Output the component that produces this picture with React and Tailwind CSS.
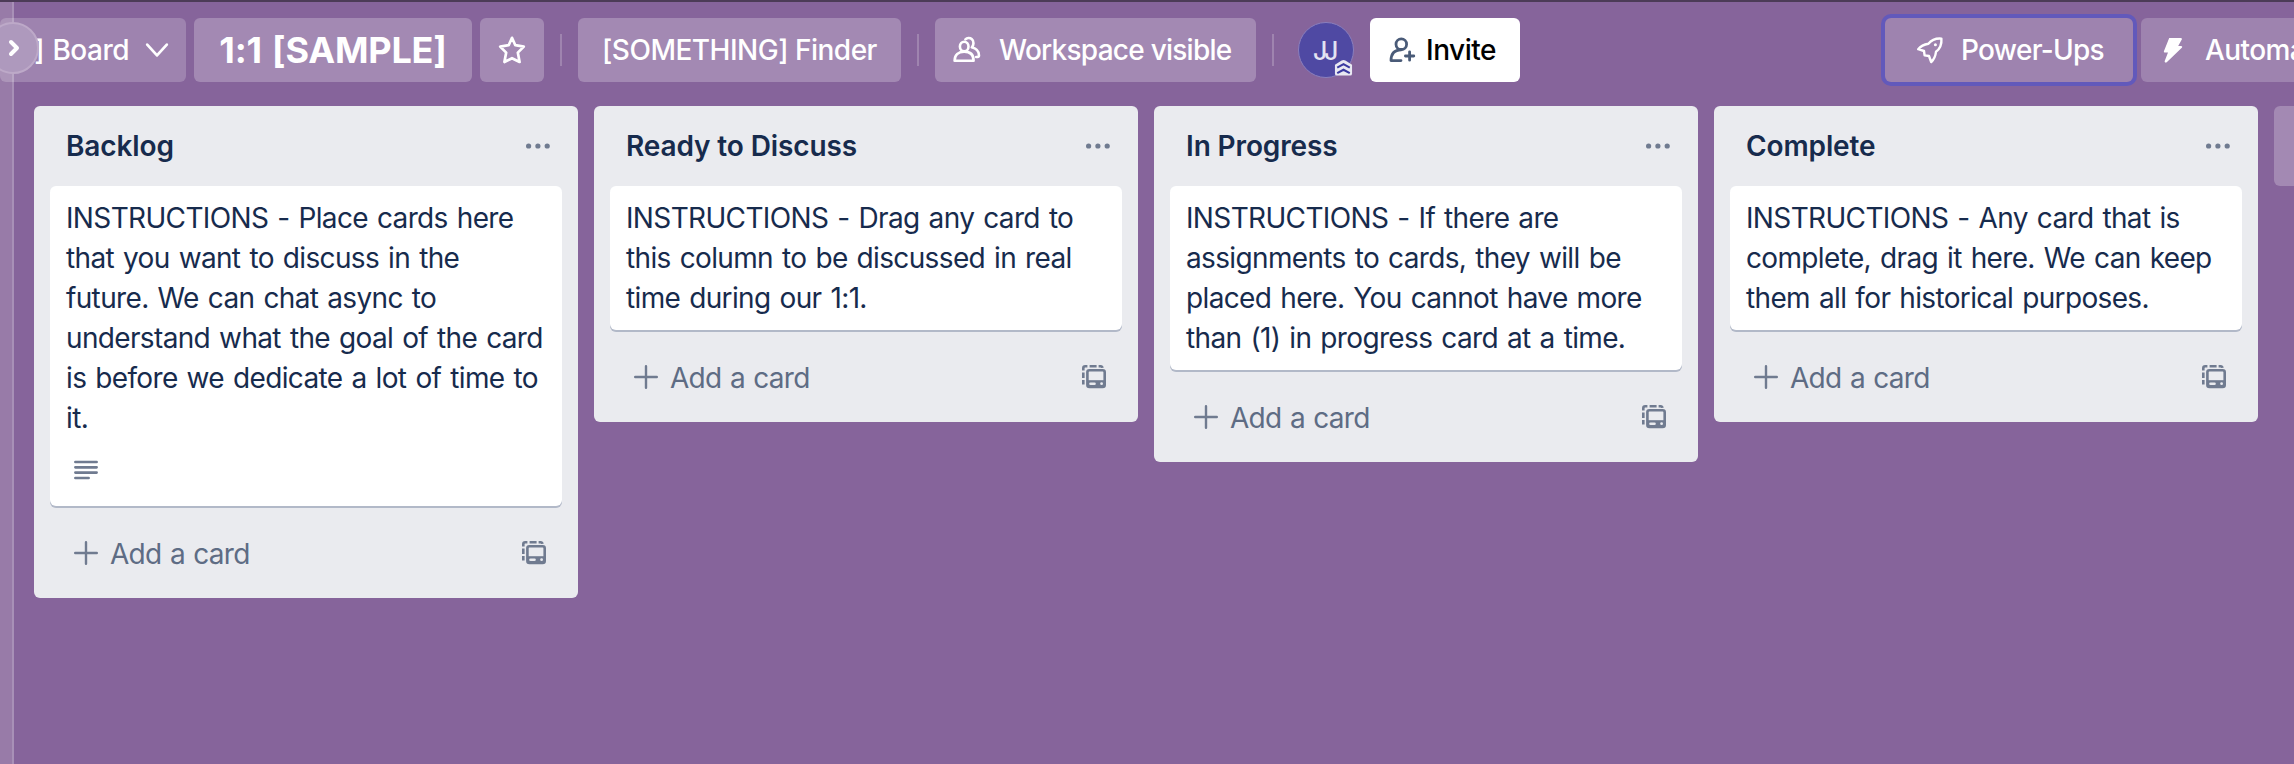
const lists = [
  {
    title: "Backlog",
    lines: [
      "INSTRUCTIONS - Place cards here",
      "that you want to discuss in the",
      "future. We can chat async to",
      "understand what the goal of the card",
      "is before we dedicate a lot of time to",
      "it.",
    ],
    description: true,
  },
  {
    title: "Ready to Discuss",
    lines: [
      "INSTRUCTIONS - Drag any card to",
      "this column to be discussed in real",
      "time during our 1:1.",
    ],
  },
  {
    title: "In Progress",
    lines: [
      "INSTRUCTIONS - If there are",
      "assignments to cards, they will be",
      "placed here. You cannot have more",
      "than (1) in progress card at a time.",
    ],
  },
  {
    title: "Complete",
    lines: [
      "INSTRUCTIONS - Any card that is",
      "complete, drag it here. We can keep",
      "them all for historical purposes.",
    ],
  },
];

function StarIcon() {
  return (
    <svg className="h-7 w-7" viewBox="0 0 28 28" fill="none" stroke="currentColor" strokeWidth="2.7" strokeLinejoin="round">
      <path d="M14 1.8 L17.3 9.2 L25.8 10.6 L19.8 16.6 L21.6 26 L14 22.2 L6.4 26 L8.2 16.6 L2.2 10.6 L10.7 9.2 Z" />
    </svg>
  );
}

function WorkspaceIcon() {
  return (
    <svg className="h-7 w-7 shrink-0" viewBox="0 0 28 28" fill="none" stroke="currentColor" strokeWidth="2.6" strokeLinecap="round" strokeLinejoin="round">
      <ellipse cx="11.2" cy="10.5" rx="4.3" ry="4.8" />
      <path d="M1.6 24.7 C1.6 18.6 5.6 15.6 11.2 15.6 C16.8 15.6 20.6 18.6 20.6 24.7 Z" />
      <path d="M12.4 3.4 C14 1.8 16.8 1.5 18.7 3 C21.2 5 20.9 9.2 18.8 11.3 C23.6 12.6 26 16 26 19.4 C26 20.6 25 21 23.2 21" />
    </svg>
  );
}

function InviteIcon() {
  return (
    <svg className="h-7 w-7 shrink-0 text-[#4a5b78]" viewBox="0 0 28 28" fill="none" stroke="currentColor" strokeWidth="2.8" strokeLinecap="round" strokeLinejoin="round">
      <circle cx="13.3" cy="8.2" r="5.3" />
      <path d="M13.3 13.8 C6 13.8 3 18.4 3 24.6 H13" />
      <path d="M21.6 15.8 V24.2 M17.4 20 H25.8" />
    </svg>
  );
}

function RocketIcon() {
  return (
    <svg className="h-7 w-7 shrink-0" viewBox="0 0 28 28" fill="none" stroke="currentColor" strokeWidth="2.4" strokeLinejoin="round" strokeLinecap="round">
      <path d="M25.4 2.6 C19.6 2.2 15.2 4.2 12.4 7.8 C8.6 8.4 4.8 10 2.2 13.2 L8 15 L8.6 19.4 L13 20 L15.2 26 C18.4 23 19.6 19 20 15.8 C23.6 13 25.9 8.6 25.4 2.6 Z" />
      <circle cx="19.4" cy="8.8" r="1.5" fill="currentColor" stroke="none" />
    </svg>
  );
}

function BoltIcon() {
  return (
    <svg className="h-7 w-5 shrink-0" viewBox="0 0 20 28" fill="currentColor">
      <path d="M6.2 2 H17.8 C18.8 2 19.2 2.8 18.8 3.6 L15.2 10 H18 C19.2 10 19.6 11 18.8 11.8 L4 26 C2.6 27.2 1.2 26.4 1.8 24.8 L5 16.6 H2 C1 16.6 0.6 15.8 1 15 Z" />
    </svg>
  );
}

function TemplateIcon() {
  return (
    <svg className="h-6 w-6 shrink-0" viewBox="0 0 24 24" fill="none" stroke="currentColor" strokeWidth="2.6">
      <path d="M1.3 5.5 V3.2 Q1.3 1.3 3.2 1.3 H5.4 M7.6 1.3 H14.6 M16.6 1.3 H18.6 Q20.2 1.3 20.4 2.8 M1.3 7.4 V13 M1.3 15 V19.4" />
      <rect x="5.4" y="5.3" width="17.3" height="16.6" rx="2" />
      <path d="M5 15.2 H23 V22 H5 Z" fill="currentColor" stroke="none" />
      <rect x="7.2" y="17.4" width="6.6" height="2.6" rx="1.3" fill="#eaebef" stroke="none" />
      <circle cx="19.6" cy="18.7" r="1.4" fill="#eaebef" stroke="none" />
    </svg>
  );
}

function Divider() {
  return <div className="h-8 w-0.5 shrink-0 bg-[#9f84af]" />;
}

function List({ title, lines, description }) {
  return (
    <section className="w-[544px] shrink-0 rounded-md bg-[#eaebef]">
      <header className="flex h-20 items-center justify-between pl-8 pr-7 text-[#172b4d]">
        <h2 className="text-[28px] font-semibold leading-10 tracking-[-0.12px]">{title}</h2>
        <svg className="h-6 w-6 text-[#707b90]" viewBox="0 0 24 24" fill="currentColor">
          <circle cx="2.6" cy="12" r="2.6" />
          <circle cx="11.9" cy="12" r="2.6" />
          <circle cx="21.2" cy="12" r="2.6" />
        </svg>
      </header>
      <article className="mx-4 rounded-md bg-white px-4 pb-3 pt-3 text-[28px] leading-10 tracking-[-0.65px] text-[#172b4d] shadow-[0_2px_0_#b2b9c8] [word-spacing:1.8px]">
        {lines.map((line) => (
          <p key={line} className="whitespace-nowrap">
            {line}
          </p>
        ))}
        {description && (
          <div className="flex h-14 pl-2 pt-[22px]">
            <svg className="h-6 w-6 text-[#707b90]" viewBox="0 0 24 24" fill="none" stroke="currentColor" strokeWidth="2.7" strokeLinecap="round">
              <path d="M1.4 2 H22.6 M1.4 7.3 H22.6 M1.4 12.6 H22.6 M1.4 18 H14.6" />
            </svg>
          </div>
        )}
      </article>
      <footer className="flex h-[92px] items-center justify-between pb-0.5 pl-10 pr-8 pt-1 text-[#707b90]">
        <div className="flex items-center gap-3">
          <svg className="h-6 w-6" viewBox="0 0 24 24" fill="none" stroke="currentColor" strokeWidth="2.4" strokeLinecap="round">
            <path d="M12 1.2 V22.8 M1.2 12 H22.8" />
          </svg>
          <span className="pt-0.5 text-[28px] leading-10 tracking-[-0.7px] text-[#5e6c84] [word-spacing:1.2px]">Add a card</span>
        </div>
        <TemplateIcon />
      </footer>
    </section>
  );
}

export default function App() {
  return (
    <div className="relative flex h-[764px] w-[2294px] overflow-hidden border-t-2 border-[#4c3b57] bg-[#86649b] font-['Inter',sans-serif]">
      <aside className="w-3.5 shrink-0 border-r-2 border-[#a890b7] bg-[#987ba8]" />
      <div className="flex min-w-0 flex-1 flex-col">
        <nav className="-ml-3.5 flex h-[104px] items-start pt-4 text-[28px] font-medium leading-10 text-white">
          <div className="flex h-16 w-[186px] shrink-0 items-center justify-end rounded-md bg-white/20 pr-[17px]">
            <span className="whitespace-nowrap tracking-[-0.5px] [word-spacing:1.5px]">] Board</span>
            <svg className="ml-4 h-6 w-6" viewBox="0 0 24 24" fill="none" stroke="currentColor" strokeWidth="2.7" strokeLinecap="round" strokeLinejoin="round">
              <path d="M2.2 6.6 L12 17.4 L21.8 6.6" />
            </svg>
          </div>
          <div className="ml-2 flex h-16 w-[278px] shrink-0 items-center justify-center rounded-md bg-white/24 text-[36px] font-bold">
            <span className="whitespace-nowrap tracking-[-0.2px] [word-spacing:2px]">1:1 [SAMPLE]</span>
          </div>
          <div className="ml-2 flex h-16 w-16 shrink-0 items-center justify-center rounded-md bg-white/24">
            <StarIcon />
          </div>
          <div className="ml-4 flex h-16 items-center">
            <Divider />
          </div>
          <div className="ml-4 flex h-16 w-[323px] shrink-0 items-center rounded-md bg-white/24 pl-6">
            <span className="whitespace-nowrap tracking-[-0.5px]">[SOMETHING] Finder</span>
          </div>
          <div className="ml-4 flex h-16 items-center">
            <Divider />
          </div>
          <div className="ml-4 flex h-16 w-[321px] shrink-0 items-center rounded-md bg-white/24 pl-[18px]">
            <WorkspaceIcon />
            <span className="ml-[18px] whitespace-nowrap tracking-[-0.75px]">Workspace visible</span>
          </div>
          <div className="ml-4 flex h-16 items-center">
            <Divider />
          </div>
          <div className="relative ml-6 mt-1 flex h-14 w-14 shrink-0 items-center justify-center rounded-full border border-[#8a7fbd] bg-[#4f49a3]">
            <span className="-ml-1 mt-0.5 text-[25px] tracking-[-3.5px] text-[#e4e3f2]">JJ</span>
            <svg className="absolute bottom-0 right-0 h-[18px] w-[19px]" viewBox="0 0 20 18" fill="none">
              <path d="M1 5.5 L8 1 Q10 0 12 1 L19 5.5 V15 Q19 17 17 17 H3 Q1 17 1 15 Z" fill="#e9e9f2" />
              <path d="M3.4 8.6 L10 5 L16.6 8.6 M3.4 14.4 L10 10.8 L16.6 14.4" stroke="#3a3aa0" strokeWidth="2.2" />
            </svg>
          </div>
          <div className="ml-4 flex h-16 w-[150px] shrink-0 items-center rounded-md bg-white pl-[18px] text-black">
            <InviteIcon />
            <span className="ml-2.5 whitespace-nowrap tracking-[-0.5px]">Invite</span>
          </div>
          <div className="ml-auto flex h-16 w-[248px] shrink-0 items-center rounded-md bg-white/20 pl-[31px] shadow-[0_0_0_4px_#6259bb]">
            <RocketIcon />
            <span className="ml-[17px] whitespace-nowrap tracking-[-0.7px]">Power-Ups</span>
          </div>
          <div className="ml-2 flex h-16 w-[153px] shrink-0 items-center overflow-hidden rounded-l-md bg-white/20 pl-[22px]">
            <BoltIcon />
            <span className="ml-[22px] whitespace-nowrap tracking-[-0.6px]">Automation</span>
          </div>
        </nav>
        <main className="flex items-start gap-4 pl-5">
          {lists.map((list) => (
            <List key={list.title} {...list} />
          ))}
          <div className="h-20 w-[544px] shrink-0 rounded-md bg-white/24" />
        </main>
      </div>
      <div className="absolute -left-[13px] top-5 flex h-[52px] w-[52px] items-center justify-center rounded-full border-2 border-[#bda9c8] bg-[#ae99bd]">
        <svg className="ml-px h-[18px] w-3.5" viewBox="0 0 14 18" fill="none" stroke="white" strokeWidth="4" strokeLinecap="round" strokeLinejoin="round">
          <path d="M4 3 L10 9 L4 15" />
        </svg>
      </div>
    </div>
  );
}
